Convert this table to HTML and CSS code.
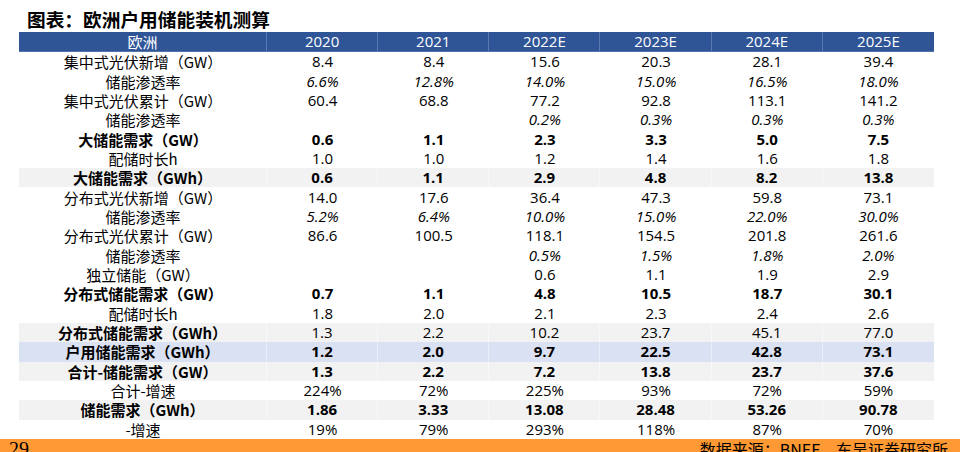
FILE: index.html
```html
<!DOCTYPE html>
<html lang="zh">
<head>
<meta charset="utf-8">
<title>欧洲户用储能装机测算</title>
<link rel="stylesheet" href="styles.css">
</head>
<body>
<div class="page">
  <h1 class="title">图表：欧洲户用储能装机测算</h1>
  <div class="tbl">
    <div class="row head"><div class="c">欧洲</div><div class="c">2020</div><div class="c">2021</div><div class="c">2022E</div><div class="c">2023E</div><div class="c">2024E</div><div class="c">2025E</div></div>
    <div class="row"><div class="c">集中式光伏新增（GW）</div><div class="c">8.4</div><div class="c">8.4</div><div class="c">15.6</div><div class="c">20.3</div><div class="c">28.1</div><div class="c">39.4</div></div>
    <div class="row it"><div class="c">储能渗透率</div><div class="c">6.6%</div><div class="c">12.8%</div><div class="c">14.0%</div><div class="c">15.0%</div><div class="c">16.5%</div><div class="c">18.0%</div></div>
    <div class="row"><div class="c">集中式光伏累计（GW）</div><div class="c">60.4</div><div class="c">68.8</div><div class="c">77.2</div><div class="c">92.8</div><div class="c">113.1</div><div class="c">141.2</div></div>
    <div class="row it"><div class="c">储能渗透率</div><div class="c"></div><div class="c"></div><div class="c">0.2%</div><div class="c">0.3%</div><div class="c">0.3%</div><div class="c">0.3%</div></div>
    <div class="row b"><div class="c">大储能需求（GW）</div><div class="c">0.6</div><div class="c">1.1</div><div class="c">2.3</div><div class="c">3.3</div><div class="c">5.0</div><div class="c">7.5</div></div>
    <div class="row"><div class="c">配储时长h</div><div class="c">1.0</div><div class="c">1.0</div><div class="c">1.2</div><div class="c">1.4</div><div class="c">1.6</div><div class="c">1.8</div></div>
    <div class="row b gray"><div class="c">大储能需求（GWh）</div><div class="c">0.6</div><div class="c">1.1</div><div class="c">2.9</div><div class="c">4.8</div><div class="c">8.2</div><div class="c">13.8</div></div>
    <div class="row"><div class="c">分布式光伏新增（GW）</div><div class="c">14.0</div><div class="c">17.6</div><div class="c">36.4</div><div class="c">47.3</div><div class="c">59.8</div><div class="c">73.1</div></div>
    <div class="row it"><div class="c">储能渗透率</div><div class="c">5.2%</div><div class="c">6.4%</div><div class="c">10.0%</div><div class="c">15.0%</div><div class="c">22.0%</div><div class="c">30.0%</div></div>
    <div class="row"><div class="c">分布式光伏累计（GW）</div><div class="c">86.6</div><div class="c">100.5</div><div class="c">118.1</div><div class="c">154.5</div><div class="c">201.8</div><div class="c">261.6</div></div>
    <div class="row it"><div class="c">储能渗透率</div><div class="c"></div><div class="c"></div><div class="c">0.5%</div><div class="c">1.5%</div><div class="c">1.8%</div><div class="c">2.0%</div></div>
    <div class="row"><div class="c">独立储能（GW）</div><div class="c"></div><div class="c"></div><div class="c">0.6</div><div class="c">1.1</div><div class="c">1.9</div><div class="c">2.9</div></div>
    <div class="row b"><div class="c">分布式储能需求（GW）</div><div class="c">0.7</div><div class="c">1.1</div><div class="c">4.8</div><div class="c">10.5</div><div class="c">18.7</div><div class="c">30.1</div></div>
    <div class="row"><div class="c">配储时长h</div><div class="c">1.8</div><div class="c">2.0</div><div class="c">2.1</div><div class="c">2.3</div><div class="c">2.4</div><div class="c">2.6</div></div>
    <div class="row gray lb"><div class="c">分布式储能需求（GWh）</div><div class="c">1.3</div><div class="c">2.2</div><div class="c">10.2</div><div class="c">23.7</div><div class="c">45.1</div><div class="c">77.0</div></div>
    <div class="row b blue"><div class="c">户用储能需求（GWh）</div><div class="c">1.2</div><div class="c">2.0</div><div class="c">9.7</div><div class="c">22.5</div><div class="c">42.8</div><div class="c">73.1</div></div>
    <div class="row b gray"><div class="c">合计-储能需求（GW）</div><div class="c">1.3</div><div class="c">2.2</div><div class="c">7.2</div><div class="c">13.8</div><div class="c">23.7</div><div class="c">37.6</div></div>
    <div class="row"><div class="c">合计-增速</div><div class="c">224%</div><div class="c">72%</div><div class="c">225%</div><div class="c">93%</div><div class="c">72%</div><div class="c">59%</div></div>
    <div class="row b gray"><div class="c">储能需求（GWh）</div><div class="c">1.86</div><div class="c">3.33</div><div class="c">13.08</div><div class="c">28.48</div><div class="c">53.26</div><div class="c">90.78</div></div>
    <div class="row"><div class="c">-增速</div><div class="c">19%</div><div class="c">79%</div><div class="c">293%</div><div class="c">118%</div><div class="c">87%</div><div class="c">70%</div></div>
  </div>
  <div class="footer">
    <span class="pg">29</span>
    <span class="src">数据来源：BNEF，东吴证券研究所</span>
  </div>
</div>
</body>
</html>
```

FILE: styles.css
```css
html, body {
  margin: 0;
  padding: 0;
  background: #ffffff;
}

.page {
  width: 960px;
  height: 452px;
  overflow: hidden;
  display: flex;
  flex-direction: column;
  font-family: "Open Sans", "Noto Sans CJK SC", sans-serif;
  color: #000;
}

.title {
  margin: 0;
  height: 32px;
  padding-left: 27px;
  box-sizing: border-box;
  font-family: "Noto Sans CJK SC", sans-serif;
  font-size: 18.7px;
  font-weight: 700;
  line-height: 38px;
  white-space: nowrap;
}

.tbl {
  margin-left: 19px;
  width: 915px;
  display: flex;
  flex-direction: column;
}

.row {
  display: grid;
  grid-template-columns: 248px repeat(6, 1fr);
  height: 19.35px;
  font-size: 15px;
}

.c {
  display: flex;
  align-items: center;
  justify-content: center;
  white-space: nowrap;
  line-height: 1;
  box-sizing: border-box;
}

.row .c:first-child {
  font-family: "Noto Sans CJK SC", sans-serif;
}

.head {
  height: 20px;
  background: #2f5597;
  color: #ffffff;
}

.head .c {
  border-right: 1px solid #5b79b3;
  border-bottom: 1px solid #5373af;
}

.head .c:last-child {
  border-right: none;
}

.it .c + .c {
  font-style: italic;
}

.b .c {
  font-weight: 700;
}

.lb .c:first-child {
  font-weight: 700;
}

.gray {
  background: #f2f2f2;
}

.blue {
  background: #d9e1f2;
}

.gray .c,
.blue .c {
  border-right: 1px solid rgba(255, 255, 255, 0.45);
}

.gray .c:last-child,
.blue .c:last-child {
  border-right: none;
}

.footer {
  margin-top: auto;
  height: 13px;
  background: #ff9933;
  display: flex;
  justify-content: space-between;
  align-items: flex-start;
  overflow: visible;
}

.pg {
  font-family: "Liberation Serif", serif;
  font-size: 20px;
  line-height: 20px;
  padding-left: 9px;
}

.src {
  font-family: "Noto Sans CJK SC", sans-serif;
  font-size: 16px;
  line-height: 20px;
  padding-right: 12px;
}
```
